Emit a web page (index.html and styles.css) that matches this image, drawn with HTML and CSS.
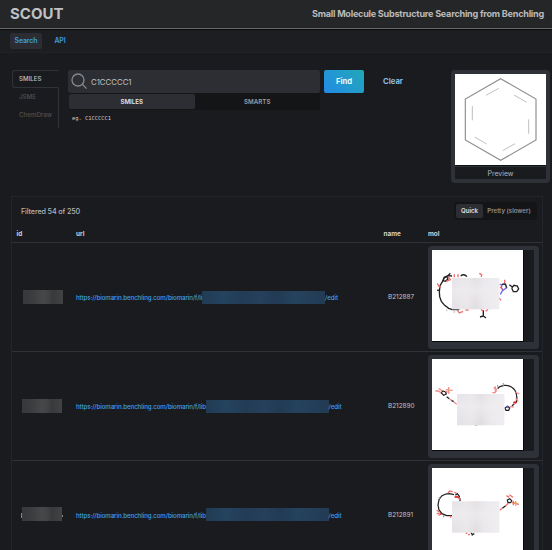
FILE: index.html
```html
<!DOCTYPE html>
<html lang="en">
<head>
<meta charset="utf-8">
<title>SCOUT</title>
<link rel="stylesheet" href="styles.css">
</head>
<body>
<header class="header">
  <h1>SCOUT</h1>
  <p>Small Molecule Substructure Searching from Benchling</p>
</header>
<nav class="nav"><a class="active">Search</a><a>API</a></nav>
<main>
  <section class="query">
    <div class="tabs"><div class="tab selected">SMILES</div><div class="tab">JSME</div><div class="tab">ChemDraw</div></div>
    <div class="search">
      <div class="field">
        <svg width="17" height="17" viewBox="0 0 17 17" fill="none" stroke="#85878c" stroke-width="1.3"><circle cx="7" cy="7" r="6"/><path d="M11.3 11.3L15.6 15.6"/></svg>
        <span>C1CCCCC1</span>
      </div>
      <div class="segments"><span class="on">SMILES</span><span>SMARTS</span></div>
      <code>eg. C1CCCCC1</code>
    </div>
    <button class="find">Find</button>
    <button class="clear">Clear</button>
    <figure class="preview">
      <svg viewBox="45 42 273 273" fill="none" stroke="#8f8f8f" stroke-width="3.5"><path d="M182 56L288 117V240L182 301L76 240V117Z"/><path d="M138 106L176 85M222 105L260 127M97 138V181M266 178V221M104 231L140 252M188 272L225 251" stroke="#bbb" stroke-width="2.8"/></svg>
      <figcaption>Preview</figcaption>
    </figure>
  </section>
  <section class="results">
    <div class="toolbar"><span class="count">Filtered 54 of 250</span><div class="mode"><span class="on">Quick</span><span>Pretty (slower)</span></div></div>
    <div class="row head"><span>id</span><span>url</span><span>name</span><span>mol</span></div>
    <div class="row first">
      <div class="id"><i class="mask"></i></div>
      <div class="url"><span class="base">https://biomarin.benchling.com/biomarin/f/li</span><i class="linkmask"></i><span>/edit</span></div>
      <div class="name">B212887</div>
      <div class="mol"><svg viewBox="36 30 273 273" fill="none" stroke-width="4">
        <g stroke="#222"><path d="M96 108L85 107L73 112L69 122L60 137L58 155L59 170L64 184L74 196L86 205L97 209H118"/><path d="M69 122L76 124L84 117L80 109L72 114ZM83 108L91 100M122 108Q132 100 141 110M51 151L60 150"/><path d="M190 211V228L180 231M190 228L198 234"/><path d="M268 134L277 141M275 144L282 136L292 138L296 147L290 155L280 155L275 144"/></g>
        <g stroke="#6c6ce8"><path d="M246 134L256 132L260 143L249 151L244 144ZM248 151L241 163M239 132L244 135"/></g>
        <g stroke="#f36b6b"><path d="M52 130L56 138L62 142M79 124L93 118M84 111L90 116M103 103V112M114 103V112M178 100L185 104L184 111M183 208L189 214M197 214L204 208M112 210L118 219L129 214M136 210H146M254 119V131M240 141L248 147M237 174L243 181"/></g>
        <path d="M246 133L256 132M256 132L260 143" stroke="#333"/>
        <path d="M80 208V214M103 211V219" stroke="#ccc"/>
        <use href="#redaction" x="96" y="114"/>
      </svg></div>
    </div>
    <div class="row second">
      <div class="id"><i class="mask"></i></div>
      <div class="url"><span class="base">https://biomarin.benchling.com/biomarin/f/lib</span><i class="linkmask"></i><span>/edit</span></div>
      <div class="name">B212890</div>
      <div class="mol"><svg viewBox="36 27 273 273" fill="none" stroke-width="3.8">
        <path d="M233 116Q238 108 254 106Q275 105 286 123Q293 139 289 155L276 168M255 174L263 169L269 174L266 181H258ZM64 129L68 123L77 126L79 132L71 136ZM80 140L88 146M94 151L101 155" stroke="#222"/>
        <path d="M46 123H56L63 129M56 115L67 123M76 123L89 129M78 119L98 121M86 111V131M88 147L95 151M102 156L110 163M221 113L231 119M217 128H225L230 121M226 109V128M286 126L298 132M287 145L295 155M283 153V164M269 170L281 171" stroke="#f58a8a"/>
        <path d="M280 157L291 158" stroke="#dc2929"/><path d="M83 120H90" stroke="#e5b849"/><path d="M259 169L266 171" stroke="#5555de"/><path d="M233 105V111M250 99V107M166 226H171" stroke="#aaa"/>
        <use href="#redaction" x="111" y="132"/>
      </svg></div>
    </div>
    <div class="row third">
      <div class="id"><i class="mask marked"></i></div>
      <div class="url"><span class="base">https://biomarin.benchling.com/biomarin/f/lib</span><i class="linkmask"></i><span>/edit</span></div>
      <div class="name">B212891</div>
      <div class="mol"><svg viewBox="36 38 273 273" fill="none" stroke-width="3.8">
        <path d="M97 181H80L66 175L57 164L54 149L57 133L65 122L77 116L88 115L102 118M106 120L112 115L118 123L116 129M120 129V138M153 232L157 238L163 235M157 235V241M262 134L269 130L275 136L272 142H264ZM247 159L257 151" stroke="#222"/>
        <path d="M84 113L89 107L98 109M103 111L110 114M103 125L112 124L121 134M50 165L58 170M50 175L60 173M55 180L64 176M92 181V187M136 232L142 235M144 238H150M259 121L268 126M268 118L279 126M239 165L247 159M257 151L265 144M276 142L297 147M280 136V150M287 138V151" stroke="#f36b6b"/>
        <path d="M105 125H116M61 174L64 178" stroke="#dc2929"/><path d="M282 143H290" stroke="#e5b849"/><path d="M56 126L61 129M71 180V186" stroke="#999"/>
        <use href="#redaction" x="96" y="138"/>
      </svg></div>
    </div>
  </section>
</main>
<svg class="defs" width="0" height="0"><defs><linearGradient id="shade"><stop stop-color="#e2dfe6"/><stop offset=".3" stop-color="#e9e6e9"/><stop offset=".5" stop-color="#dfdbdd"/><stop offset=".7" stop-color="#eae8ec"/><stop offset="1" stop-color="#f0eef2"/></linearGradient><linearGradient id="glow" x2="0" y2="1"><stop stop-color="#eeebf0" stop-opacity=".3"/><stop offset=".4" stop-color="#f0edf0" stop-opacity=".75"/><stop offset="1" stop-color="#eeebed" stop-opacity=".1"/></linearGradient><g id="redaction" stroke="none"><rect width="142" height="94" fill="url(#shade)"/><rect width="142" height="94" fill="url(#glow)"/></g></defs></svg>
</body>
</html>
```
FILE: styles.css
```css
* { box-sizing: border-box; }
body { margin: 0; width: 552px; height: 550px; overflow: hidden; background: #1a1b1e; color: #b4b5b8; font: 7px Inter, sans-serif; }
h1, p, figure { margin: 0; }
.header { height: 29px; display: flex; justify-content: space-between; align-items: center; padding: 0 8px 1px 10px; background: #252628; border-bottom: 1px solid #66696a; }
.header h1 { font-size: 15px; font-weight: 700; color: #c0c1c3; }
.header p { font-size: 9.1px; font-weight: 700; letter-spacing: -0.25px; color: #b9babc; }
.nav { height: 24px; display: flex; gap: 5px; padding: 3px 10px 4px; background: #1d1e21; border-top: 1px solid #0b0b0c; border-bottom: 1px solid #212226; }
.nav a { display: flex; align-items: center; height: 16px; width: 26px; padding-bottom: 1px; justify-content: center; border-radius: 2px; color: #3e9de2; font-size: 6.9px; font-weight: 600; letter-spacing: -0.1px; }
.nav a:first-child { width: 32px; }
.nav a.active { background: #2b2d32; }
.query { display: flex; padding: 17px 1px 0 12px; height: 143px; }
.tabs { width: 47px; height: 58px; margin-right: 9px; }
.tab { height: 18px; display: flex; align-items: center; padding: 0 0 1px 7px; font-size: 6.2px; font-weight: 500; color: #505155; border-right: 1px solid #303237; }
.tab:last-child { height: 22px; padding-bottom: 5px; }
.tab.selected { color: #c1c2c5; border: 1px solid #303237; border-right-color: transparent; border-radius: 3px 0 0 3px; padding-left: 6px; }
.search { width: 252px; margin-right: 4px; }
.field { height: 23px; display: flex; align-items: center; padding-left: 3px; gap: 3px; background: #2c2e33; border-radius: 2px; color: #c1c2c5; font-size: 7.8px; }
.segments { display: flex; height: 17px; margin-left: 1px; background: #141517; font-size: 6.2px; font-weight: 600; }
.segments span { flex: 1; display: flex; justify-content: center; align-items: center; margin: 1px 0; border-radius: 2px; color: #9b9da1; }
.segments .on { background: #2c2e33; color: #e5e5e6; }
code { display: block; margin: 4px 0 0 4px; font: 5.4px/8px "DejaVu Sans Mono", monospace; color: #d0d1d4; }
button { height: 23px; border: 0; border-radius: 2px; padding: 0; font: 700 7.7px Inter, sans-serif; }
.find { width: 40px; color: #e9f7fc; background: linear-gradient(45deg, #228be6, #22a8b8); }
.clear { width: 58px; background: none; color: #8abde2; }
.preview { width: 99px; height: 113px; margin-left: 29px; padding: 4px; background: #2f3138; border-radius: 4px; text-align: center; }
.preview svg { display: block; width: 91px; height: 92px; background: #fff; border-bottom: 1px solid #101113; }
.preview figcaption { height: 12px; margin-top: 1px; background: #1a1b1e; font-size: 6.9px; line-height: 13px; color: #b4b5b8; }
.results { margin-left: 11px; width: 532px; border: 1px solid #24252a; }
.toolbar { height: 30px; display: flex; justify-content: space-between; padding: 5px 5px 0 9px; }
.count { padding-top: 5px; font-size: 7.2px; font-weight: 500; letter-spacing: -0.13px; }
.mode { display: flex; width: 83px; height: 18px; padding: 2px; background: #141517; font-size: 6.1px; font-weight: 600; color: #8e9094; border-radius: 2px; }
.mode span { flex: 1; display: flex; align-items: center; justify-content: center; padding-bottom: 1px; }
.mode .on { flex: 0 0 27px; background: #2c2e33; color: #e0e0e2; border-radius: 2px; }
.row { display: grid; grid-template-columns: 64px 306px 46px 114px; align-items: center; border-bottom: 1px solid #303136; height: 109px; }
.row.head { height: 16px; font-size: 6.4px; font-weight: 700; color: #d0d1d4; padding-bottom: 1px; }
.head span:first-child { padding-left: 4.5px; }
.head span:nth-child(3) { padding-left: 1.5px; }
.id { padding-left: 11px; }
.second .id, .third .id { padding-left: 10px; }
.mask { display: block; position: relative; width: 40px; height: 14px; background: linear-gradient(90deg, #38393b 0 10%, #3e3f41 30%, #47484a 50%, #414244 65%, #38393b 75%, #424345); }
.third .mask, .third .linkmask { margin-bottom: 2px; }
.marked::before, .marked::after { content: ""; position: absolute; left: -1px; top: 6px; width: 1px; height: 5px; background: #85868a; }
.marked::after { left: 40px; top: 8px; height: 2px; }
.url { display: flex; align-items: center; color: #41a0ea; font-size: 6.15px; font-weight: 500; letter-spacing: -0.085px; white-space: nowrap; }
.base { width: 126px; }
.second .base, .third .base { width: 129.5px; }
.linkmask { width: 123px; height: 13px; background: linear-gradient(90deg, #213b53, #24435f 17%, #223c56 32%, #263f5b 48%, #223a53 60%, #25425e 75%, #233b54); }
.name { padding-left: 6px; font-size: 6.4px; color: #c1c2c5; }
.mol { width: 111px; height: 103px; padding: 4px; border-radius: 4px; display: flex; background: linear-gradient(#1a1b1e, #1a1b1e) 4px 4px / 102px 92px no-repeat, #2f3138; }
.mol svg { width: 92px; height: 92px; background: #fff; border: 1px solid #08090a; border-width: 0 1px 1px 0; }
.defs { position: absolute; }
```
